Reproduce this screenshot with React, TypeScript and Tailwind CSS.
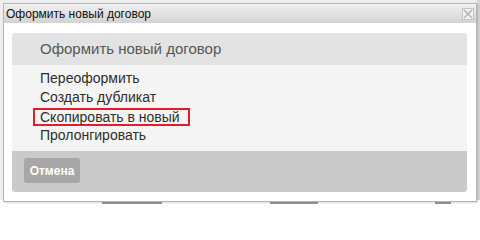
import React from "react";

export default function App() {
  const items = ["Переоформить", "Создать дубликат", "Скопировать в новый", "Пролонгировать"];
  return (
    <div
      className="relative w-[480px] h-[204px] overflow-hidden bg-[#eeeeee]"
      style={{ fontFamily: '"Liberation Sans", Arial, sans-serif' }}
    >
      {/* background page fragments */}
      <div className="absolute right-0 top-0 w-[3px] h-[204px] bg-[#d4d4d4]" />
      <div className="absolute left-0 top-[200px] w-[480px] h-[4px] bg-[#ffffff]" />
      <div className="absolute left-[102px] top-[202px] w-[60px] h-[2px] bg-[#9a9a9a]" />
      <div className="absolute left-[270px] top-[202px] w-[48px] h-[2px] bg-[#9a9a9a]" />
      <div className="absolute left-[435px] top-[202px] w-[16px] h-[2px] bg-[#9a9a9a]" />

      {/* dialog */}
      <div className="absolute left-[3px] top-[3px] w-[474px] h-[199px] border border-[#b4b4b4] bg-white flex flex-col shadow-[1px_1px_2px_rgba(0,0,0,0.15)]">
        <div className="h-[19px] flex items-center justify-between pl-[2px] pr-[2px] bg-gradient-to-b from-[#f1f1f1] to-[#d3d3d3]">
          <span className="text-[12px] leading-[14px] text-[#111111]">Оформить новый договор</span>
          <div className="w-[12px] h-[12px] border border-[#c4c4c4] bg-[#f2f2f2] flex items-center justify-center mt-[1px]">
            <svg width="10" height="10" viewBox="0 0 10 10">
              <path d="M1 1 L9 9 M9 1 L1 9" stroke="#b5b5b5" strokeWidth="1.6" />
            </svg>
          </div>
        </div>
        <div className="flex-1 pt-[10px] pl-[8px] pr-[9px] pb-[9px]">
          <div className="h-full rounded-[3px] overflow-hidden flex flex-col">
            <div className="h-[32px] bg-[#e3e3e3] pl-[28px] flex items-center">
              <span className="text-[15px] leading-[18px] text-[#575757]">Оформить новый договор</span>
            </div>
            <div className="bg-[#f4f4f4] h-[86px] pt-[4px] pl-[28px]">
              {items.map((t, i) =>
                i === 2 ? (
                  <div key={t} className="h-[19px] flex items-start">
                    <span className="block -ml-[7px] mt-[1px] border-2 border-[#e31e24] pl-[5px] pr-[8px] text-[14px] leading-[14px] text-[#2e2e2e]">
                      {t}
                    </span>
                  </div>
                ) : (
                  <div key={t} className="h-[19px] text-[14px] leading-[19px] text-[#2e2e2e]">
                    {t}
                  </div>
                )
              )}
            </div>
            <div className="flex-1 bg-[#cacaca] pt-[7px] pl-[12px]">
              <div className="w-[56px] h-[25px] rounded-[3px] bg-[#a7a7a7] flex items-center justify-center text-white text-[12px] font-bold">
                Отмена
              </div>
            </div>
          </div>
        </div>
      </div>
    </div>
  );
}
